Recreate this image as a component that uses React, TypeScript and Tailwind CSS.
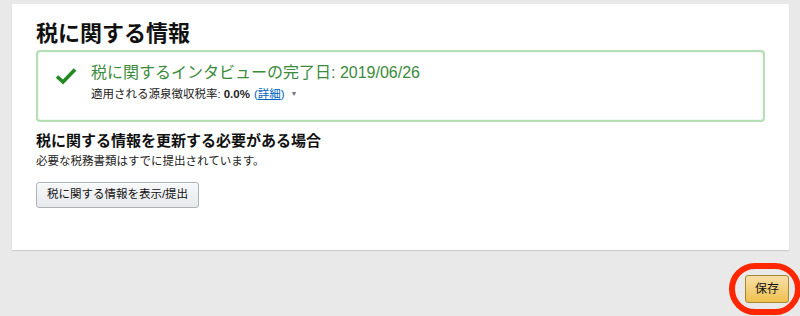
const font = { fontFamily: '"Liberation Sans", "Noto Sans CJK JP", sans-serif' };

export default function App() {
  return (
    <div
      className="w-[800px] h-[316px] bg-[#e9e9e9] pt-[4px] pl-[12px] pr-[11px] overflow-hidden text-[#111]"
      style={font}
    >
      <div className="h-[246px] bg-white px-6 pt-[16px] shadow-[0_1px_1px_rgba(0,0,0,0.12)]">
        <h1 className="text-[22px] leading-[28px] font-bold">税に関する情報</h1>

        <div className="mt-[2px] h-[72px] rounded-[4px] border-2 border-[#b6deb5] shadow-[inset_0_0_2px_rgba(120,190,120,0.35)] flex items-start pl-[17px] pt-[11px]">
          <svg width="22" height="18" viewBox="0 0 22 18" className="mt-[4px] shrink-0">
            <path d="M2 9.5 L8 15 L20 2.5" fill="none" stroke="#238a23" strokeWidth="3.6" strokeLinecap="butt" strokeLinejoin="miter" />
          </svg>
          <div className="ml-[14px]">
            <div className="text-[16px] leading-[20px] text-[#3a8b3a]">税に関するインタビューの完了日: 2019/06/26</div>
            <div className="mt-[3px] text-[11.5px] leading-[16px] text-[#222] flex items-center">
              <span>適用される源泉徴収税率: </span>
              <span className="font-bold ml-[3px]">0.0%</span>
              <span className="ml-[4px] text-[#0066c0]">
                (<span className="underline">詳細</span>)
              </span>
              <span className="ml-[6px] text-[7px] text-[#777]">▼</span>
            </div>
          </div>
        </div>

        <h2 className="mt-[9px] text-[15px] leading-[20px] font-bold">税に関する情報を更新する必要がある場合</h2>
        <p className="mt-[2px] text-[11.5px] leading-[16px] text-[#222]">必要な税務書類はすでに提出されています。</p>

        <button
          className="mt-[13px] h-[26px] w-[163px] rounded-[3px] border border-[#adb1b8] bg-gradient-to-b from-[#f7f8fa] to-[#e7e9ec] text-[11.5px] text-[#111] shadow-[0_1px_0_rgba(255,255,255,0.6)_inset]"
          style={font}
        >
          税に関する情報を表示/提出
        </button>
      </div>

      <div className="flex justify-end mt-[25px]">
        <div className="relative">
          <button
            className="h-[28px] w-[44px] rounded-[3px] border border-[#a88734] bg-gradient-to-b from-[#f7dfa5] to-[#f0c14b] text-[12px] text-[#111]"
            style={font}
          >
            保存
          </button>
          <div className="absolute left-[-16px] top-[-12px] w-[72px] h-[52px] rounded-[26px] border-[6px] border-[#ff2600] pointer-events-none" />
        </div>
      </div>
    </div>
  );
}
